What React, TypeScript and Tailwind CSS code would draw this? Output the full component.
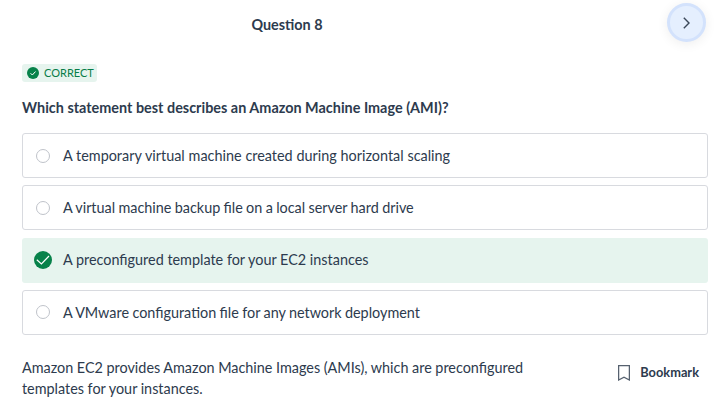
const answers = [
  { text: 'A temporary virtual machine created during horizontal scaling', correct: false, spacing: '[word-spacing:0.14px]' },
  { text: 'A virtual machine backup file on a local server hard drive', correct: false, spacing: '[word-spacing:-0.35px]' },
  { text: 'A preconfigured template for your EC2 instances', correct: true, spacing: '' },
  { text: 'A VMware configuration file for any network deployment', correct: false, spacing: '[word-spacing:-0.3px]' },
];

function Check({ size }: { size: number }) {
  return (
    <svg width={size} height={size} viewBox="0 0 18 18" className="shrink-0">
      <circle cx="9" cy="9" r="9" fill="#07824a" />
      <path d={size < 15 ? 'M5.3 9.3 8 12 12.8 6.8' : 'M2.8 8.8 7.4 12.9 15 5'} fill="none" stroke="#fff" strokeWidth={size < 15 ? 1.5 : 1.2} />
    </svg>
  );
}

export default function App() {
  return (
    <main className="h-[407px] w-[721px] overflow-hidden bg-white pl-[22px] pr-[13px] font-['Lato',sans-serif] text-[14.4px] text-[#2d3b4e]">
      <header className="flex h-[46px] items-start">
        <h1 className="ml-[229.4px] mt-[14px] leading-[21px] font-bold">Question 8</h1>
        <button className="mt-[3px] ml-auto mr-[2px] flex size-[39px] items-center justify-center rounded-full border-[3px] border-[#d3e2fc] bg-[#e5effe] shadow-[0_2px_12px_rgba(0,0,0,0.07)]">
          <svg width="8" height="12" viewBox="0 0 8 12" fill="none" stroke="#3b4859" strokeWidth="1.4"><path d="M.8.8 6 6 .8 11.2" /></svg>
        </button>
      </header>
      <div className="mt-[18px] flex h-[18px] w-[75px] items-center gap-[5px] rounded-[3px] bg-[#e6f4ee] pl-[5px] text-[11px] leading-[18px] text-[#077d48]">
        <Check size={12} /><span>CORRECT</span>
      </div>
      <h2 className="mt-[15px] leading-[21px] font-bold [word-spacing:0.06px]">Which statement best describes an Amazon Machine Image (AMI)?</h2>
      <div className="mt-[15px] flex flex-col gap-[7.3px]">
        {answers.map((a) => (
          <label key={a.text} className={a.correct ? 'flex h-[45px] items-center gap-[11px] rounded-[3px] bg-[#e6f4ee] pl-[12px]' : 'flex h-[45px] items-center gap-[13px] rounded-[3px] border border-[#d8dadf] pl-[13px]'}>
            {a.correct ? <Check size={18} /> : <span className="size-[14px] rounded-full border border-[#bfc3ca]" />}
            <span className={a.spacing}>{a.text}</span>
          </label>
        ))}
      </div>
      <footer className="mt-[22px] flex justify-between">
        <p className="w-[520px] leading-[21px] [word-spacing:-0.1px]">Amazon EC2 provides Amazon Machine Images (AMIs), which are preconfigured templates for your instances.</p>
        <button className="mt-[5px] mr-[9px] flex h-[21px] items-center gap-[10px] text-[12.8px] font-bold">
          <svg width="12" height="16" viewBox="0 0 12 16" fill="none" stroke="#56616f" strokeWidth="1.3" className="mt-px"><path d="M.6.6h10.8v14.4L6 12.2.6 15z" /></svg>
          Bookmark
        </button>
      </footer>
    </main>
  );
}
